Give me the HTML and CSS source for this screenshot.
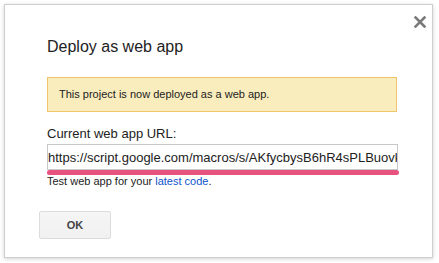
FILE: index.html
```html
<!DOCTYPE html>
<html lang="en">
<head>
  <meta charset="UTF-8" />
  <title>Deploy as web app</title>
  <link rel="stylesheet" href="styles.css">
</head>
<body>

  <!-- Dialog -->
  <div class="dialog">
    <span class="close" title="Close">
      <svg width="12" height="12" viewBox="0 0 12 12">
        <path d="M1.5 1.5 L10.5 10.5 M10.5 1.5 L1.5 10.5" stroke="#7a7a7a" stroke-width="2.6" stroke-linecap="square" fill="none" />
      </svg>
    </span>

    <h1 class="title">Deploy as web app</h1>

    <div class="notice">This project is now deployed as a web app.</div>

    <div class="label">Current web app URL:</div>
    <input class="url" type="text" readonly value="https://script.google.com/macros/s/AKfycbysB6hR4sPLBuovkQx7nT2dJ0wPqE3mZ/exec">
    <div class="mark"></div>
    <div class="hint">Test web app for your <a href="#">latest code</a>.</div>

    <div class="actions">
      <button class="btn">OK</button>
    </div>
  </div>

</body>
</html>
```

FILE: styles.css
```css
body {
  margin: 0;
  padding: 4px;
  background: #fff;
  font-family: 'Liberation Sans', Arial, sans-serif;
  color: #222;
}

/* Dialog box */
.dialog {
  position: relative;
  box-sizing: border-box;
  width: 429px;
  height: 254px;
  padding: 32px 35px 18px 42px;
  background: #fff;
  border: 1px solid #cfcfcf;
  box-shadow: 0 1px 4px rgba(0, 0, 0, 0.18);
}

.close {
  position: absolute;
  top: 11px;
  right: 6px;
  width: 12px;
  height: 12px;
  cursor: pointer;
}

.close svg {
  display: block;
}

.title {
  margin: 0;
  font-size: 16px;
  line-height: 20px;
  font-weight: normal;
  color: #222;
}

/* Yellow message */
.notice {
  margin-top: 20px;
  padding: 10px 11px;
  font-size: 11px;
  line-height: 13px;
  background: #f9edbe;
  border: 1px solid #f0c36d;
}

.label {
  margin-top: 14px;
  font-size: 13px;
  line-height: 16px;
}

.url {
  display: block;
  box-sizing: border-box;
  width: 351px;
  height: 26px;
  margin: 2px 0 0;
  padding: 1px 0 0;
  font-family: 'Liberation Sans', Arial, sans-serif;
  font-size: 13px;
  color: #222;
  border: 1px solid #c8c8c8;
  outline: none;
  background: #fff;
}

/* Pink underline */
.mark {
  width: 352px;
  height: 5px;
  border-radius: 3px;
  background: #e6537f;
}

.hint {
  font-size: 11px;
  line-height: 13px;
}

.hint a {
  color: #15c;
  text-decoration: none;
}

.actions {
  margin-top: 23px;
  margin-left: -8px;
}

.btn {
  display: block;
  box-sizing: border-box;
  width: 72px;
  height: 28px;
  padding: 0;
  font-family: 'Liberation Sans', Arial, sans-serif;
  font-size: 11px;
  font-weight: bold;
  color: #444;
  background: linear-gradient(#f5f5f5, #f1f1f1);
  border: 1px solid #dcdcdc;
  border-radius: 2px;
  cursor: pointer;
}
```
